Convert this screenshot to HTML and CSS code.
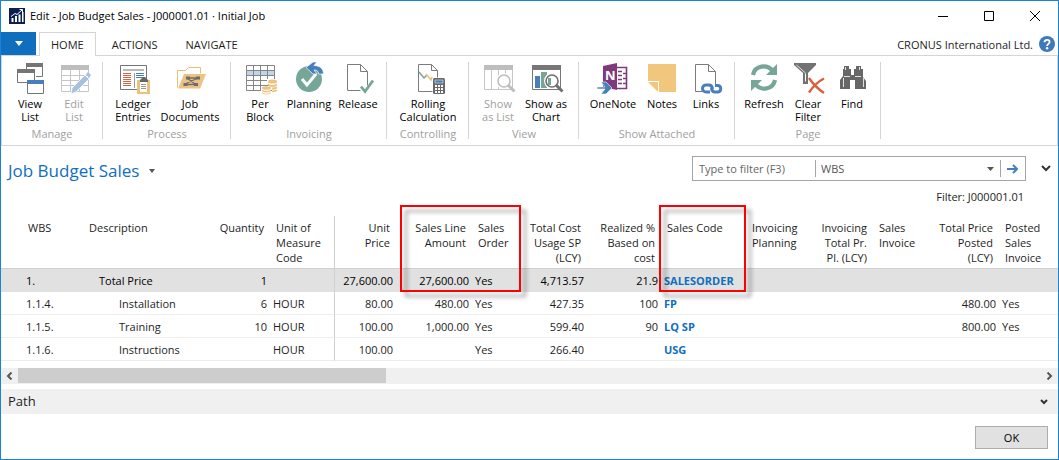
FILE: index.html
```html
<!DOCTYPE html>
<html lang="en">
<head>
<meta charset="utf-8">
<title>Edit - Job Budget Sales - J000001.01 · Initial Job</title>
<link rel="stylesheet" href="styles.css">
</head>
<body>
<div class="window">
  <header class="titlebar">
    <svg class="app-icon" width="16" height="16" viewBox="0 0 16 16"><rect width="16" height="16" fill="#0b2050"/><path d="M2.500 14v-4h2v4zM6 14V8h2v6zM9.500 14V6.500h2V14zM13 14V4h1.500v10z" fill="#fff"/><path d="M2 8.500l4-3 2 1 5-4.500M10.500 1.500h3v3" fill="none" stroke="#fff"/></svg>
    <h1 class="caption">Edit - Job Budget Sales - J000001.01 · Initial Job</h1>
    <div class="window-buttons">
      <button aria-label="Minimize"><svg width="12" height="12" viewBox="0 0 12 12"><path d="M1 6.500h10" stroke="#000"/></svg></button>
      <button aria-label="Maximize"><svg width="12" height="12" viewBox="0 0 12 12"><path d="M1.500 1.500h9v9h-9z" fill="none" stroke="#000"/></svg></button>
      <button aria-label="Close"><svg width="12" height="12" viewBox="0 0 12 12"><path d="M1 1l10 10M11 1L1 11" stroke="#000"/></svg></button>
    </div>
  </header>

  <nav class="tabs">
    <button class="file-tab" aria-label="File"><svg width="8" height="5" viewBox="0 0 8 5"><path d="M0 0h8L4 5z" fill="#fff"/></svg></button>
    <button class="tab tab-active">HOME</button>
    <button class="tab">ACTIONS</button>
    <button class="tab">NAVIGATE</button>
    <span class="company">CRONUS International Ltd.</span>
    <button class="help" aria-label="Help"><svg width="16" height="16" viewBox="0 0 16 16"><circle cx="8" cy="8" r="8" fill="#3f7ab8"/><path d="M5.500 6.300C5.500 3 10.600 3 10.600 6c0 1.800-2.500 1.900-2.500 4" fill="none" stroke="#fff" stroke-width="1.800"/><circle cx="8.100" cy="12.200" r="1.200" fill="#fff"/></svg></button>
  </nav>

  <div class="ribbon">
    <section class="group">
      <div class="actions">
        <button class="action"><svg class="icon" viewBox="0 0 32 32"><g fill="#fff" stroke="#757575"><path d="M12.500 1.500h16v13h-16z"/><path d="M3.500 7.500h17v13h-17z"/><path d="M13.500 18.500h16v13h-16z"/></g><path d="M12 1h17v4H12zM3 7h18v4H3z" fill="#757575"/><path d="M13 18h17v4H13z" fill="#467fbb"/><path d="M21.500 7v11" stroke="#fff"/></svg><span>View<br>List</span></button>
        <button class="action" disabled><svg class="icon" viewBox="0 0 32 32"><path d="M3.500 4.500h27v25h-27zM3 13.500h27M3 18.500h27M3 23.500h27M12.500 8v21M21.500 8v21" fill="none" stroke="#c6c6c6"/><path d="M3 3h28v5H3z" fill="#bebebe"/><path d="M13 32l1-6L27 13l4 4-13 13z" fill="#a5c3e0" stroke="#fff" stroke-width=".8"/><path d="M28 12l2-2 3 3-2 3z" fill="#a5c3e0"/></svg><span>Edit<br>List</span></button>
      </div>
      <h2>Manage</h2>
    </section>
    <section class="group">
      <div class="actions">
        <button class="action a-46"><svg class="icon" viewBox="0 0 32 32"><path d="M3.500 3.500h26v24h-26z" fill="#fff" stroke="#757575"/><path d="M6 7h21v2H6z" fill="#b9b9b9"/><path d="M17.500 11v15" stroke="#999"/><path d="M6 11.500h8M6 13.500h8M6 15.500h8M6 17.500h8M6 19.500h8M6 21.500h8M6 23.500h8" stroke="#dd6043"/><path d="M19 11.500h8M19 13.500h8M19 15.500h8" stroke="#467fbb"/><path d="M20 18h13v14H20z" fill="#eac27a"/><path d="M23 19h7v11h-7z" fill="#fff"/><path d="M23 18l3-3h2l3 3v2h-8z" fill="#666"/><path d="M24 22.500h5M24 24.500h5M24 26.500h5" stroke="#999"/></svg><span>Ledger<br>Entries</span></button>
        <button class="action a-68"><svg class="icon" viewBox="0 0 32 32"><path d="M3.500 25.500v-17h8l3-3h12v6" fill="none" stroke="#eabf78"/><path d="M4 26.500L10 12h22l-6 14.500z" fill="#ecc381"/><path d="M12 14.500h4v3h-4zM22 14.500h4v3h-4zM9.500 21h4v3h-4zM20 21h4v3h-4z" fill="#6d6d6d"/><path d="M13 16l8 6M24 16l-13 6M14 16h9M12 22.500h9" stroke="#6d6d6d" stroke-width="1.300"/></svg><span>Job<br>Documents</span></button>
      </div>
      <h2>Process</h2>
    </section>
    <section class="group">
      <div class="actions">
        <button class="action"><svg class="icon" viewBox="0 0 32 32"><path d="M2 8h28v5H2z" fill="#bfd5ec"/><path d="M2.500 3.500h28v25h-28zM2 8.500h28M2 13.500h28M2 18.500h28M2 23.500h28M9.500 3v25M16.500 3v25M23.500 3v25" fill="none" stroke="#858585"/><path d="M17 24h10v8H17zM23 17h11v14h-6v-8h-5z" fill="#fff"/><g fill="#ecc27c"><ellipse cx="28.500" cy="19.500" rx="4.500" ry="2"/><path d="M24 21.500q4.500 3 9 0v2q-4.500 3-9 0zM28 25.500q3 0 5-1v2q-2 1.500-5 1zM28 28.500q3 0 5-1v1.500q-2 1.500-5 1z"/><ellipse cx="22.500" cy="26" rx="4.500" ry="1.800"/><path d="M18 27.500q4.500 3 9 0v1.500q-4.500 3-9 0zM18 30.300q4.500 3 9 0v1q-4.500 2.500-9 0z"/></g></svg><span>Per<br>Block</span></button>
        <button class="action a-54"><svg class="icon" viewBox="0 0 32 32"><circle cx="16" cy="17" r="13" fill="#76a698"/><path d="M9 17l5 6 9-11" fill="none" stroke="#fff" stroke-width="3"/><path d="M13 5.500L20 0h4l-3 3.500c6 0 9.500 3.500 9.500 8.500h-5c0-3-1.500-4-4.500-4l3 4h-4z" fill="#467fbb" stroke="#fff" stroke-width=".7"/></svg><span>Planning</span></button>
        <button class="action"><svg class="icon" viewBox="0 0 32 32"><path d="M18.500 28.500h-13v-26h13l7 7v14M18.500 2.500v7h7" fill="#fff" stroke="#7c7c7c"/><path d="M19 24.500l4 5 8-11" fill="none" stroke="#76a698" stroke-width="2.800"/></svg><span>Release</span></button>
      </div>
      <h2>Invoicing</h2>
    </section>
    <section class="group">
      <div class="actions">
        <button class="action a-68"><svg class="icon" viewBox="0 0 32 32"><path d="M20.500 29.500h-14v-27h13l6 6v7M19.500 2.500v6h6" fill="#fff" stroke="#7c7c7c"/><path d="M7 10l5 6 3-3" fill="none" stroke="#76a698" stroke-width="1.500"/><path d="M14 12l5 6 1-3" fill="none" stroke="#eabf78" stroke-width="1.500"/><rect x="21" y="16" width="12" height="16" rx="1.500" fill="#696969"/><path d="M23 18h8v3h-8z" fill="#467fbb" stroke="#fff" stroke-width=".5"/><path d="M23 24h8M23 27h8M23 30h8" stroke="#fff" stroke-width="2" stroke-dasharray="2 1"/></svg><span>Rolling<br>Calculation</span></button>
      </div>
      <h2>Controlling</h2>
    </section>
    <section class="group">
      <div class="actions">
        <button class="action" disabled><svg class="icon" viewBox="0 0 32 32"><path d="M2.500 4.500h28v23h-28zM9.500 8v19M16.500 8v19M23.500 8v19" fill="none" stroke="#c6c6c6"/><path d="M2 3h29v5H2z" fill="#bebebe"/><circle cx="22" cy="19" r="6" fill="#fff" stroke="#fff" stroke-width="4"/><circle cx="22" cy="19" r="6" fill="#fff" stroke="#bebebe" stroke-width="1.600"/><path d="M26 23l6.500 6.500" stroke="#bebebe" stroke-width="3"/></svg><span>Show<br>as List</span></button>
        <button class="action a-52"><svg class="icon" viewBox="0 0 32 32"><path d="M2.500 4.500h28v23h-28z" fill="#fff" stroke="#777"/><path d="M2 3h29v5H2z" fill="#777"/><path d="M5 14h5v12H5z" fill="#467fbb"/><path d="M11 10h6v16h-6z" fill="#76a698"/><circle cx="22" cy="19" r="6" fill="#fff" stroke="#fff" stroke-width="4"/><circle cx="22" cy="19" r="6" fill="#fff" stroke="#707070" stroke-width="1.600"/><path d="M26 23l6.500 6.500" stroke="#707070" stroke-width="3"/><path d="M18 16h3v7h-3z" fill="#76a698"/></svg><span>Show as<br>Chart</span></button>
      </div>
      <h2>View</h2>
    </section>
    <section class="group">
      <div class="actions">
        <button class="action a-54"><svg class="icon" viewBox="0 0 32 32"><path d="M19 5.500h10.500v21H19M26 11.500h4M26 16.500h4M26 21.500h4" fill="none" stroke="#80397b" stroke-width="1.600"/><path d="M21 9.500h4M21 13.500h4M21 17.500h4M21 21.500h4" stroke="#80397b" stroke-width="1.600"/><path d="M6 4l14-3v27L6 25z" fill="#80397b"/><text x="8" y="18" class="note-letter">N</text><path d="M0 25h8l-4-5h5l6 6-6 6H4l4-5H0z" fill="#467fbb" stroke="#fff" stroke-width=".6"/></svg><span>OneNote</span></button>
        <button class="action"><svg class="icon" viewBox="0 0 32 32"><path d="M2 2h28v28H13V19H2z" fill="#f0c77c"/><path d="M2 20h10v10z" fill="#f0c77c"/></svg><span>Notes</span></button>
        <button class="action"><svg class="icon" viewBox="0 0 32 32"><path d="M12 29.500H5.500v-27h13l7 7V22M18.500 2.500v7h7" fill="#fff" stroke="#7c7c7c"/><g fill="none" stroke="#467fbb" stroke-width="3"><path d="M20 30h-4a3.500 3.500 0 0 1 0-7h3q3 0 3.500 4"/><path d="M25 23.500h3a3.300 3.300 0 0 1 0 6.500h-3q-3 0-3.500-4"/></g></svg><span>Links</span></button>
      </div>
      <h2>Show Attached</h2>
    </section>
    <section class="group">
      <div class="actions">
        <button class="action"><svg class="icon" viewBox="0 0 32 32"><g fill="none" stroke="#76a698" stroke-width="4.200"><path d="M5 13c2-10 14-11 20-4"/><path d="M27 18c-2 10-14 11-20 4"/></g><path d="M29 2v11H18z" fill="#76a698"/><path d="M3 29V18h11z" fill="#76a698"/></svg><span>Refresh</span></button>
        <button class="action"><svg class="icon" viewBox="0 0 32 32"><path d="M2 1h22v2l-8 8v11h-5V11L2 3z" fill="#727272"/><path d="M13.500 11.500v8" stroke="#fff"/><path d="M4.500 3l9 8" stroke="#fff" stroke-width=".8"/><path d="M17 16c4 6 9 11 15 15M32 16.500c-6 3-11 8-15 14" fill="none" stroke="#d9603f" stroke-width="2.400"/></svg><span>Clear<br>Filter</span></button>
        <button class="action"><svg class="icon" viewBox="0 0 32 32"><path d="M8 4h5v3h2v6h3V7h2V4h5v3h2v8l3 4v8H19v-9h-5v9H4v-9l3-4V7h1z" fill="#676767"/><path d="M9.500 5v3M7.500 16v9M23.500 5v3M27.500 16v9M8 14.500h6M19 14.500h6" stroke="#fff" stroke-width=".8"/></svg><span>Find</span></button>
      </div>
      <h2>Page</h2>
    </section>
  </div>

  <main>
    <div class="page-head">
      <button class="page-title">Job Budget Sales <svg width="6" height="4" viewBox="0 0 6 4"><path d="M0 0h6L3 4z" fill="#555"/></svg></button>
      <form class="filter">
        <input type="text" placeholder="Type to filter (F3)" aria-label="Filter text">
        <div class="field">
          <select aria-label="Filter field"><option>WBS</option></select>
          <svg width="7" height="4" viewBox="0 0 7 4"><path d="M0 0h7L3.500 4z" fill="#555"/></svg>
        </div>
        <button type="button" class="go" aria-label="Apply filter"><svg width="12" height="10" viewBox="0 0 12 10"><path d="M0 5h10M6 1l4 4-4 4" fill="none" stroke="#467fbb" stroke-width="2"/></svg></button>
      </form>
      <button class="expand" aria-label="Expand filter pane"><svg width="10" height="7" viewBox="0 0 10 7"><path d="M1 1l4 4 4-4" fill="none" stroke="#333" stroke-width="2"/></svg></button>
    </div>
    <p class="filter-info">Filter: J000001.01</p>

    <table class="grid">
      <colgroup><col class="w82"><col class="w122"><col class="w65"><col class="w65"><col class="w61"><col class="w76"><col class="w47"><col class="w68"><col class="w74"><col class="w85"><col class="w62"><col class="w65"><col class="w57"><col class="w69"><col class="w59"></colgroup>
      <thead>
        <tr>
          <th class="wbs">WBS</th><th>Description</th><th class="num">Quantity</th><th class="frozen">Unit of<br>Measure<br>Code</th><th class="num">Unit<br>Price</th>
          <th class="num marked"><span class="mark mark-wide"></span>Sales Line<br>Amount</th><th>Sales<br>Order</th><th class="num">Total Cost<br>Usage SP<br>(LCY)</th><th class="num">Realized %<br>Based on<br>cost</th>
          <th class="marked"><span class="mark mark-code"></span>Sales Code</th><th>Invoicing<br>Planning</th><th class="num">Invoicing<br>Total Pr.<br>Pl. (LCY)</th><th>Sales<br>Invoice</th><th class="num">Total Price<br>Posted<br>(LCY)</th><th>Posted<br>Sales<br>Invoice</th>
        </tr>
      </thead>
      <tbody>
        <tr class="selected"><td class="wbs">1.</td><td class="level-1">Total Price</td><td class="num">1</td><td class="frozen"></td><td class="num">27,600.00</td><td class="num">27,600.00</td><td>Yes</td><td class="num">4,713.57</td><td class="num">21.9</td><td><a href="#">SALESORDER</a></td><td></td><td></td><td></td><td></td><td></td></tr>
        <tr><td class="wbs">1.1.4.</td><td class="level-2">Installation</td><td class="num">6</td><td class="frozen">HOUR</td><td class="num">80.00</td><td class="num">480.00</td><td>Yes</td><td class="num">427.35</td><td class="num">100</td><td><a href="#">FP</a></td><td></td><td></td><td></td><td class="num">480.00</td><td>Yes</td></tr>
        <tr><td class="wbs">1.1.5.</td><td class="level-2">Training</td><td class="num">10</td><td class="frozen">HOUR</td><td class="num">100.00</td><td class="num">1,000.00</td><td>Yes</td><td class="num">599.40</td><td class="num">90</td><td><a href="#">LQ SP</a></td><td></td><td></td><td></td><td class="num">800.00</td><td>Yes</td></tr>
        <tr><td class="wbs">1.1.6.</td><td class="level-2">Instructions</td><td class="num"></td><td class="frozen">HOUR</td><td class="num">100.00</td><td class="num"></td><td>Yes</td><td class="num">266.40</td><td class="num"></td><td><a href="#">USG</a></td><td></td><td></td><td></td><td></td><td></td></tr>
      </tbody>
    </table>

    <div class="scrollbar">
      <button aria-label="Scroll left"><svg width="7" height="8" viewBox="0 0 7 8"><path d="M5.500 0.500L2 4l3.500 3.500" fill="none" stroke="#555" stroke-width="2"/></svg></button>
      <div class="track"><div class="thumb"></div></div>
      <button aria-label="Scroll right"><svg width="7" height="8" viewBox="0 0 7 8"><path d="M1.500 0.500L5 4 1.500 7.500" fill="none" stroke="#555" stroke-width="2"/></svg></button>
    </div>

    <button class="fasttab">Path <svg width="8" height="6" viewBox="0 0 8 6"><path d="M1 1l3 3 3-3" fill="none" stroke="#333" stroke-width="2"/></svg></button>
  </main>

  <footer><button class="ok">OK</button></footer>
</div>
</body>
</html>
```
FILE: styles.css
```css
* { box-sizing: border-box; }

body {
  margin: 0;
  background: #fff;
  color: #1e1e1e;
  font: 11px/15px "Open Sans", "Noto Sans", sans-serif;
}

button, input, select {
  margin: 0;
  padding: 0;
  border: 0;
  border-radius: 0;
  background: none;
  color: inherit;
  font: inherit;
}

svg { display: block; flex: none; }

.window {
  display: flex;
  flex-direction: column;
  min-height: 100vh;
  border: 1px solid #1883d7;
}

/* Title bar */
.titlebar {
  display: flex;
  align-items: center;
  height: 31px;
  padding: 0 11px 2px 8px;
  color: #000;
}
.caption {
  flex: 1;
  margin: 0 0 0 5px;
  font-size: 11px;
  font-weight: 400;
}
.window-buttons { display: flex; gap: 22px; }
.window-buttons button {
  display: flex;
  justify-content: center;
  width: 24px;
}

/* Tabs */
.tabs {
  display: flex;
  align-items: stretch;
  height: 23px;
  padding-right: 3px;
}
.file-tab {
  display: flex;
  align-items: center;
  justify-content: center;
  width: 35px;
  margin-right: 3px;
  background: #106ebe;
}
.tab { padding: 2px 14px 0; }
.tab-active {
  z-index: 1;
  margin: 0 2px -1px 0;
  padding: 0 11px;
  border: 1px solid #d5d5d5;
  border-bottom: 0;
  background: #fff;
}
.company { margin-left: auto; padding-top: 5px; }
.help { margin-left: 6px; padding: 4px 0 3px; }

/* Ribbon */
.ribbon {
  display: flex;
  padding: 6px 0;
  border: 1px solid #d5d5d5;
}
.group {
  padding: 0 6px 0 7px;
  border-right: 1px solid #d5d5d5;
}
.group:first-child { padding-left: 6px; }
.actions { display: flex; height: 66px; }
.action {
  display: flex;
  flex-direction: column;
  align-items: center;
  justify-content: flex-start;
  gap: 3px;
  min-width: 44px;
  color: #000;
  line-height: 13px;
  text-align: center;
  white-space: nowrap;
}
.a-46 { min-width: 46px; }
.a-52 { min-width: 52px; }
.a-54 { min-width: 54px; }
.a-68 { min-width: 68px; }
.action:disabled { color: #a0a0a0; }
.icon {
  width: 32px;
  height: 32px;
  overflow: visible;
}
.note-letter { fill: #fff; font-size: 13px; font-weight: 700; }
.group h2 {
  margin: 0;
  color: #a0a0a0;
  font-size: 11px;
  font-weight: 400;
  line-height: 11px;
  text-align: center;
}

/* Page heading and filter */
.page-head {
  display: flex;
  align-items: center;
  padding: 10px 7px 0;
}
.page-title {
  display: flex;
  align-items: center;
  gap: 10px;
  margin-right: auto;
  padding-top: 4px;
  color: #106ebe;
  font-size: 17px;
  line-height: 21px;
}
.filter {
  display: flex;
  align-items: center;
  width: 334px;
  height: 25px;
  border: 1px solid #a5a5a5;
  color: #555;
}
.filter input { width: 122px; padding-left: 6px; }
.filter input::placeholder { color: #666; opacity: 1; }
.field {
  display: flex;
  flex: 1;
  align-items: center;
  height: 17px;
  padding-right: 6px;
  border: solid #a5a5a5;
  border-width: 0 1px;
}
.field select { flex: 1; padding-left: 5px; appearance: none; }
.go {
  display: flex;
  justify-content: center;
  width: 24px;
}
.expand { margin-left: 15px; }
.filter-info { margin: 8px 34px 12px; text-align: right; }

/* Grid */
.grid {
  width: 100%;
  border-collapse: separate;
  border-spacing: 0;
  table-layout: fixed;
}
.w47 { width: 47px; }
.w57 { width: 57px; }
.w59 { width: 59px; }
.w61 { width: 61px; }
.w62 { width: 62px; }
.w65 { width: 65px; }
.w68 { width: 68px; }
.w69 { width: 69px; }
.w74 { width: 74px; }
.w76 { width: 76px; }
.w82 { width: 82px; }
.w85 { width: 85px; }
.w122 { width: 122px; }

.grid th {
  padding: 4px 6px 3px;
  border-bottom: 1px solid #d0d0d0;
  font-weight: 400;
  text-align: left;
  vertical-align: top;
  white-space: nowrap;
}
.grid td {
  height: 23px;
  padding: 0 3px;
  border-bottom: 1px solid #ededed;
  white-space: nowrap;
}
.grid .num { text-align: right; }
.grid th.wbs { padding-left: 27px; }
.grid td.wbs { padding-left: 25px; }
.grid .level-1 { padding-left: 16px; }
.grid .level-2 { padding-left: 36px; }
.grid .frozen { border-right: 1px solid #d0d0d0; }
.grid .selected td {
  border-bottom-color: #e1e1e1;
  background: #e1e1e1;
  color: #000;
}
.grid a { color: #106ebe; font-weight: 700; text-decoration: none; }

/* Frames laid over the highlighted columns */
.grid .marked { position: relative; }
.mark {
  position: absolute;
  z-index: 1;
  top: -11px;
  height: 87px;
  border: 2px solid #f00;
  filter: drop-shadow(5px 5px 2px rgba(0, 0, 0, 0.4));
  pointer-events: none;
}
.mark-wide { left: 4px; width: 121px; }
.mark-code { left: -2px; width: 87px; }

/* Scrollbar */
.scrollbar {
  display: flex;
  height: 16px;
  margin-top: 7px;
  background: #f0f0f0;
}
.scrollbar button {
  display: flex;
  align-items: center;
  justify-content: center;
  width: 17px;
}
.track { flex: 1; }
.thumb { width: 36%; height: 15px; background: #cdcdcd; }

.fasttab {
  display: flex;
  align-items: center;
  justify-content: space-between;
  width: 100%;
  height: 25px;
  margin-top: 5px;
  padding: 0 10px 0 7px;
  background: #f0f0f0;
  font-size: 13px;
}

footer {
  display: flex;
  justify-content: flex-end;
  padding: 12px 10px 10px;
}
.ok {
  width: 73px;
  height: 23px;
  border: 1px solid #adadad;
  background: #e1e1e1;
  color: #000;
}
```
